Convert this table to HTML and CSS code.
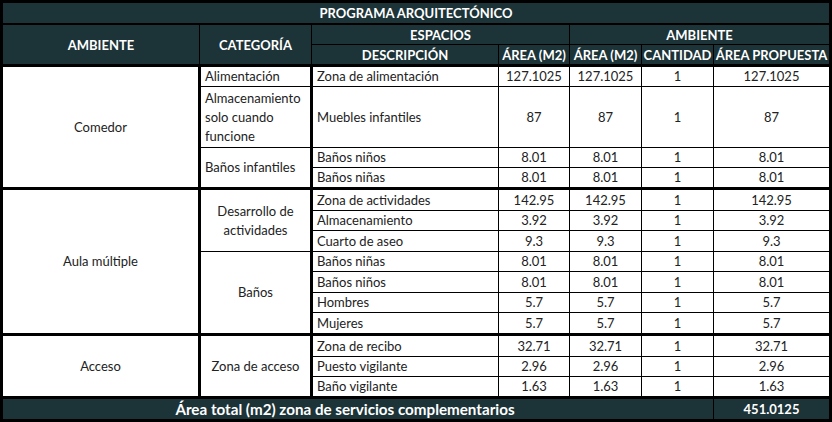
FILE: index.html
```html
<!DOCTYPE html>
<html lang="es">
<head>
<meta charset="utf-8">
<title>Programa arquitectónico</title>
<link rel="stylesheet" href="styles.css">
</head>
<body>
<table class="prog">
  <colgroup>
    <col class="c1"><col class="c2"><col class="c3"><col class="c4"><col class="c5"><col class="c6"><col class="c7">
  </colgroup>
  <thead>
    <tr class="h-title"><th colspan="7">PROGRAMA ARQUITECTÓNICO</th></tr>
    <tr class="h-row"><th rowspan="2">AMBIENTE</th><th rowspan="2">CATEGORÍA</th><th colspan="2">ESPACIOS</th><th colspan="3">AMBIENTE</th></tr>
    <tr class="h-row"><th>DESCRIPCIÓN</th><th>ÁREA (M2)</th><th>ÁREA (M2)</th><th>CANTIDAD</th><th>ÁREA PROPUESTA</th></tr>
  </thead>
  <tbody class="grp">
    <tr><td rowspan="4" class="amb">Comedor</td><td class="cat left">Alimentación</td><td class="desc">Zona de alimentación</td><td>127.1025</td><td>127.1025</td><td>1</td><td>127.1025</td></tr>
    <tr class="tall"><td class="cat left">Almacenamiento solo cuando funcione</td><td class="desc">Muebles infantiles</td><td>87</td><td>87</td><td>1</td><td>87</td></tr>
    <tr><td rowspan="2" class="cat left">Baños infantiles</td><td class="desc">Baños niños</td><td>8.01</td><td>8.01</td><td>1</td><td>8.01</td></tr>
    <tr><td class="desc">Baños niñas</td><td>8.01</td><td>8.01</td><td>1</td><td>8.01</td></tr>
  </tbody>
  <tbody class="grp">
    <tr class="r2"><td rowspan="7" class="amb">Aula múltiple</td><td rowspan="3" class="cat">Desarrollo de actividades</td><td class="desc">Zona de actividades</td><td>142.95</td><td>142.95</td><td>1</td><td>142.95</td></tr>
    <tr><td class="desc">Almacenamiento</td><td>3.92</td><td>3.92</td><td>1</td><td>3.92</td></tr>
    <tr class="r2"><td class="desc">Cuarto de aseo</td><td>9.3</td><td>9.3</td><td>1</td><td>9.3</td></tr>
    <tr><td rowspan="4" class="cat">Baños</td><td class="desc">Baños niñas</td><td>8.01</td><td>8.01</td><td>1</td><td>8.01</td></tr>
    <tr class="r2"><td class="desc">Baños niños</td><td>8.01</td><td>8.01</td><td>1</td><td>8.01</td></tr>
    <tr><td class="desc">Hombres</td><td>5.7</td><td>5.7</td><td>1</td><td>5.7</td></tr>
    <tr class="r2"><td class="desc">Mujeres</td><td>5.7</td><td>5.7</td><td>1</td><td>5.7</td></tr>
  </tbody>
  <tbody class="grp">
    <tr class="r2"><td rowspan="3" class="amb">Acceso</td><td rowspan="3" class="cat">Zona de acceso</td><td class="desc">Zona de recibo</td><td>32.71</td><td>32.71</td><td>1</td><td>32.71</td></tr>
    <tr><td class="desc">Puesto vigilante</td><td>2.96</td><td>2.96</td><td>1</td><td>2.96</td></tr>
    <tr><td class="desc">Baño vigilante</td><td>1.63</td><td>1.63</td><td>1</td><td>1.63</td></tr>
  </tbody>
  <tfoot>
    <tr class="total"><th colspan="6">Área total (m2) zona de servicios complementarios</th><th>451.0125</th></tr>
  </tfoot>
</table>
</body>
</html>
```

FILE: styles.css
```css
html, body {
  margin: 0;
  padding: 0;
  background: #ffffff;
}

.prog {
  border-collapse: collapse;
  table-layout: fixed;
  width: 829px;
  font-family: "Lato", "Liberation Sans", sans-serif;
  font-size: 13px;
  color: #222222;
  border: 3px solid #000;
}

.c1 { width: 198px; }
.c2 { width: 112px; }
.c3 { width: 187px; }
.c4 { width: 71px; }
.c5 { width: 72px; }
.c6 { width: 72px; }
.c7 { width: 117px; }

.prog th {
  background: #1c3338;
  color: #ffffff;
  font-weight: 700;
  text-align: center;
  border: 1px solid #000;
  padding: 0;
  white-space: nowrap;
}

.h-title th {
  height: 20px;
  border-bottom: 2px solid #000;
}

.h-row th {
  height: 19px;
}

thead {
  border-bottom: 3px solid #000;
}

.prog td {
  border: 1px solid #000;
  padding: 0 4px;
  height: 19px;
  text-align: center;
  vertical-align: middle;
  line-height: 19px;
}

.prog tr.r2 td {
  height: 20px;
}

.prog td.amb {
  border-right: 3px solid #000;
}

.prog td.cat {
  border-right: 3px solid #000;
}

.prog td.left,
.prog td.desc {
  text-align: left;
}

.prog tr.tall td {
  height: 60px;
}

.grp {
  border-bottom: 3px solid #000;
}

.total th {
  height: 20px;
}

.total th:first-child {
  font-size: 15.2px;
  padding-right: 26px;
}
```
